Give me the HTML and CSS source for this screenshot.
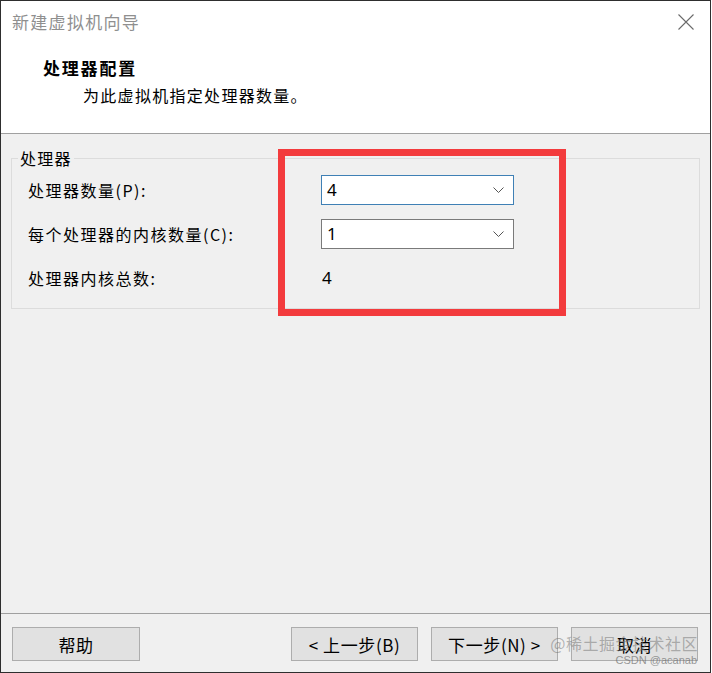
FILE: index.html
```html
<!DOCTYPE html>
<html lang="zh-CN">
<head>
<meta charset="utf-8">
<title>新建虚拟机向导</title>
<link rel="stylesheet" href="styles.css">
</head>
<body>
<div class="window">
  <div class="top">
    <div class="titlebar">
      <span class="title">新建虚拟机向导</span>
      <svg class="close" width="16" height="16" viewBox="0 0 16 16"><path d="M0.5 0.5 L15.5 15.5 M15.5 0.5 L0.5 15.5" stroke="#6a6a6a" stroke-width="1.1" fill="none"/></svg>
    </div>
    <div class="header">
      <div class="heading">处理器配置</div>
      <div class="subtitle">为此虚拟机指定处理器数量。</div>
    </div>
  </div>
  <div class="content">
    <fieldset class="group">
      <legend class="legend">处理器</legend>
      <div class="rows">
        <div class="label">处理器数量(P):</div>
        <div class="combo focused"><span class="val">4</span><svg class="chev" width="11" height="6" viewBox="0 0 11 6"><path d="M0.5 0.5 L5.5 5.5 L10.5 0.5" stroke="#555" stroke-width="1" fill="none"/></svg></div>
        <div class="label">每个处理器的内核数量(C):</div>
        <div class="combo"><span class="val">1</span><svg class="chev" width="11" height="6" viewBox="0 0 11 6"><path d="M0.5 0.5 L5.5 5.5 L10.5 0.5" stroke="#555" stroke-width="1" fill="none"/></svg></div>
        <div class="label">处理器内核总数:</div>
        <div class="value">4</div>
      </div>
    </fieldset>
  </div>
  <div class="footer">
    <button class="btn">帮助</button>
    <div class="spacer"></div>
    <button class="btn">&lt; 上一步(B)</button>
    <button class="btn">下一步(N) &gt;</button>
    <button class="btn">取消</button>
  </div>
  <div class="highlight"></div>
  <div class="watermark">
    <span class="wm1">@稀土掘金技术社区</span>
    <span class="wm2">CSDN @acanab</span>
  </div>
</div>
</body>
</html>
```
FILE: styles.css
```css
* { box-sizing: border-box; }
html, body { margin: 0; padding: 0; background: #ffffff; }
body {
  font-family: "Noto Sans CJK SC", "Noto Sans", sans-serif;
  color: #000;
}
.window {
  position: relative;
  width: 711px;
  height: 673px;
  border: 1px solid #2e2e2e;
  background: #f0f0f0;
  display: flex;
  flex-direction: column;
}
.top {
  background: #ffffff;
  height: 133px;
  border-bottom: 1px solid #a0a0a0;
  flex: none;
}
.titlebar {
  height: 42px;
  display: flex;
  align-items: center;
  justify-content: space-between;
  padding: 0 16px 0 11px;
}
.title {
  font-size: 17px;
  letter-spacing: 1.3px;
  color: #8f8f8f;
  line-height: 20px;
}
.close { display: block; margin-top: 0; }
.header {
  padding: 14px 0 0 42px;
}
.heading {
  font-size: 17px;
  font-weight: 700;
  letter-spacing: 1.8px;
  line-height: 22px;
}
.subtitle {
  font-size: 16px;
  letter-spacing: 1.3px;
  line-height: 22px;
  margin: 5px 0 0 40px;
}
.content {
  flex: 1;
  padding: 14px 10px 0 10px;
}
.group {
  margin: 0;
  border: 1px solid #dcdcdc;
  padding: 7px 16px 15px 16px;
  min-width: 0;
}
.legend {
  margin-left: -10px;
  padding: 0 2px;
  font-size: 16px;
  letter-spacing: 1.3px;
  line-height: 20px;
}
.rows {
  display: grid;
  grid-template-columns: 293px 193px;
  grid-auto-rows: 30px;
  row-gap: 14px;
  align-items: center;
}
.label {
  font-size: 16px;
  letter-spacing: 1.5px;
  line-height: 20px;
}
.combo {
  height: 30px;
  border: 1px solid #7a7a7a;
  background: #ffffff;
  display: flex;
  align-items: center;
  justify-content: space-between;
  padding: 0 9px 0 5px;
}
.combo.focused { border-color: #3f80b5; }
.val, .value {
  font-family: "Noto Sans", "Open Sans", sans-serif;
  font-size: 17px;
  line-height: 20px;
}
.value { padding-left: 1px; }
.chev { display: block; }
.footer {
  flex: none;
  height: 59px;
  border-top: 1px solid #a0a0a0;
  display: flex;
  align-items: flex-start;
  padding: 13px 12px 0 11px;
  gap: 13px;
}
.spacer { flex: 1; }
.btn {
  width: 127px;
  height: 34px;
  margin: 0;
  background: #e1e1e1;
  border: 1px solid #adadad;
  border-radius: 0;
  font-family: "Noto Sans CJK SC", "Noto Sans", sans-serif;
  font-size: 17px;
  letter-spacing: 0.6px;
  color: #000;
  padding: 0;
}
.btn:first-child { width: 128px; }
.highlight {
  position: absolute;
  left: 277px;
  top: 148px;
  width: 288px;
  height: 167px;
  border: 7px solid #f33b3d;
}
.watermark {
  position: absolute;
  right: 12px;
  top: 631px;
  display: flex;
  flex-direction: column;
  align-items: flex-end;
  white-space: nowrap;
  pointer-events: none;
}
.wm1 {
  font-size: 16px;
  line-height: 22px;
  color: rgba(120, 120, 120, 0.55);
  letter-spacing: 0.5px;
}
.wm2 {
  font-family: "Liberation Sans", sans-serif;
  font-size: 11px;
  line-height: 12px;
  color: rgba(110, 110, 110, 0.7);
  margin-right: 1px;
}
```
